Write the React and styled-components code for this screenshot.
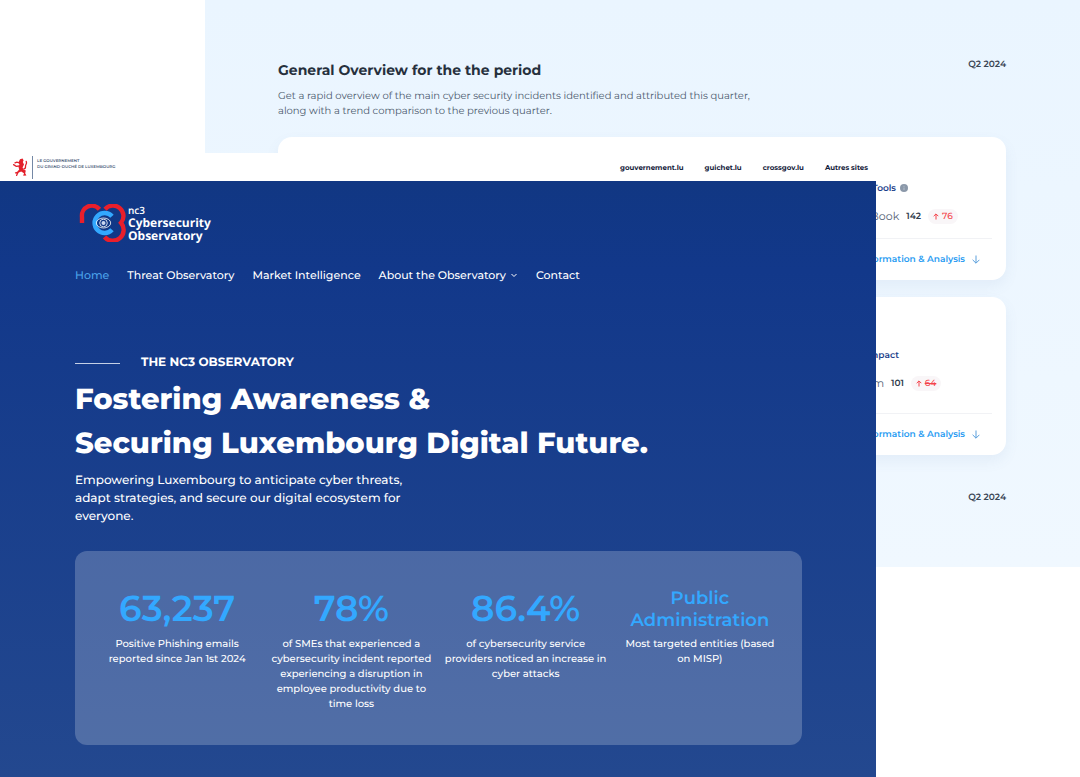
import React from "react";
import styled, { createGlobalStyle } from "styled-components";

const GlobalStyle = createGlobalStyle`
  * {
    box-sizing: border-box;
  }

  body {
    margin: 0;
    background: white;
    font-family: Montserrat, Inter, "Liberation Sans", sans-serif;
    text-rendering: geometricPrecision;
  }

  h1, h2, h3, p, dl, dd, dt {
    margin: 0;
  }

  a {
    color: inherit;
    text-decoration: none;
  }
`;

const Page = styled.div`
  display: grid;
  grid-template-columns: minmax(0, 1fr);
  grid-template-rows: minmax(100vh, auto);
`;

/* Overview page, behind */

const Overview = styled.section`
  grid-area: 1 / 1;
  align-self: start;
  margin-left: 205px;
  padding: 57px 74px 61px 73px;
  background: linear-gradient(#eaf5ff, #f0f8ff);
`;

const OverviewHead = styled.header`
  display: flex;
  justify-content: space-between;
  align-items: flex-start;
  margin-bottom: 19px;
`;

const OverviewTitle = styled.h2`
  margin-bottom: 5px;
  color: #26303d;
  font-size: 14px;
  font-weight: 700;
  line-height: 26px;
`;

const OverviewText = styled.p`
  max-width: 480px;
  color: #4a586c;
  font-size: 10px;
  line-height: 15px;
`;

const Period = styled.p`
  color: #3a4554;
  font-size: 9px;
  font-weight: 600;
  line-height: 16px;
  text-align: right;
`;

const Cards = styled.div`
  display: flex;
  flex-direction: column;
  gap: 17px;
  margin-bottom: 35px;
`;

const Card = styled.article`
  display: flex;
  flex-direction: column;
  padding: ${({ $tall }) => ($tall ? "50px" : "43px")} 14px 13px;
  border-radius: 14px;
  background: white;
  box-shadow: 0 6px 14px rgba(90, 120, 170, 0.08);
`;

const CardRow = styled.div`
  display: flex;
  justify-content: flex-end;
  align-items: center;
  gap: ${({ $gap }) => $gap || "7px"};
  height: 16px;
  margin-bottom: 12px;
  padding-right: ${({ $end }) => $end};
  white-space: nowrap;
`;

const CardTitle = styled.h3`
  color: #1c3f8b;
  font-size: 9px;
  font-weight: 600;
`;

const Info = styled.svg`
  width: 8px;
  height: 8px;
`;

const Label = styled.span`
  color: #556376;
  font-size: 11px;
`;

const Count = styled.strong`
  color: #2f3b4c;
  font-size: 9px;
  font-weight: 600;
`;

const Trend = styled.span`
  display: flex;
  align-items: center;
  justify-content: center;
  gap: 3px;
  width: 30px;
  height: 15px;
  border-radius: 8px;
  background: #f9f6f8;
  color: #f4434a;
  font-size: 9px;
  font-weight: 500;
  text-decoration: ${({ $struck }) => ($struck ? "line-through" : "none")};
`;

const CardFoot = styled.footer`
  display: flex;
  justify-content: flex-end;
  align-items: center;
  gap: 7px;
  margin-top: ${({ $tall }) => ($tall ? "10px" : "2px")};
  padding: 13px 12px 0 0;
  border-top: 1px solid #f1f2f5;
  color: #279bf2;
  font-size: 9px;
  font-weight: 600;
  line-height: 15px;
`;

/* Home page, in front */

const Home = styled.main`
  grid-area: 1 / 1;
  z-index: 1;
  display: flex;
  flex-direction: column;
  width: calc(100% - 204px);
  margin-top: 153px;
`;

const GovBar = styled.div`
  display: flex;
  justify-content: space-between;
  align-items: center;
  height: 28px;
  padding: 1px 8px 0 12px;
  background: white;
`;

const GovLogo = styled.a`
  display: flex;
  align-items: center;
  color: #4a5d7a;
  font-size: 4px;
  font-weight: 600;
  line-height: 6px;
`;

const Lion = styled.svg`
  width: 17px;
  height: 20px;
`;

const GovName = styled.span`
  height: 23px;
  margin-left: 3px;
  padding: 3px 0 0 4px;
  border-left: 1px solid #7488a5;
`;

const GovLinks = styled.nav`
  display: flex;
  gap: 21px;
  color: #14213a;
  font-size: 7px;
  font-weight: 700;
`;

const Hero = styled.div`
  flex: 1;
  padding: 23px 74px 31px 75px;
  background: linear-gradient(#113783 0%, #12388a 15%, #23488f 100%);
  color: white;
`;

const Brand = styled.a`
  display: flex;
  align-items: center;
  gap: 1px;
  width: fit-content;
  margin-left: 4px;
  font-family: "Open Sans", "Noto Sans", sans-serif;
`;

const BrandMark = styled.svg`
  width: 48px;
  height: 38px;
`;

const BrandName = styled.span`
  display: flex;
  flex-direction: column;
  font-size: 12px;
  font-weight: 700;
  line-height: 13px;
`;

const BrandSmall = styled.span`
  font-size: 10px;
  font-weight: 600;
  line-height: 12px;
`;

const MainNav = styled.nav`
  display: flex;
  align-items: center;
  gap: 18px;
  margin-top: 23px;
  font-size: 11px;
  font-weight: 500;
  line-height: 20px;
`;

const NavLink = styled.a`
  display: flex;
  align-items: center;
  gap: 4px;
  color: ${({ $active }) => ($active ? "#4ba3ea" : "white")};
  white-space: nowrap;
`;

const Eyebrow = styled.p`
  display: flex;
  align-items: center;
  gap: 21px;
  margin-top: 68px;
  font-size: 12px;
  font-weight: 700;
  line-height: 20px;

  &:before {
    content: "";
    width: 45px;
    height: 1px;
    background: #c5d0e6;
  }
`;

const Title = styled.h1`
  margin-top: 5px;
  font-size: 29px;
  font-weight: 800;
  line-height: 44px;
`;

const Lead = styled.p`
  max-width: 340px;
  margin-top: 6px;
  font-size: 12px;
  font-weight: 500;
  line-height: 18px;
`;

const Stats = styled.dl`
  display: grid;
  grid-template-columns: repeat(4, 1fr);
  margin-top: 25px;
  padding: 36px 15px 34px;
  border-radius: 12px;
  background: rgba(255, 255, 255, 0.21);
  text-align: center;
`;

const Stat = styled.div`
  display: flex;
  flex-direction: column;
  padding: 0 6px;
`;

const Figure = styled.dt`
  height: 44px;
  margin-bottom: 5px;
  color: #33a8ff;
  font-size: ${({ $words }) => ($words ? "18px" : "36px")};
  font-weight: 600;
  line-height: ${({ $words }) => ($words ? "22px" : "44px")};
`;

const Caption = styled.dd`
  min-height: 75px;
  font-size: 10px;
  font-weight: 500;
  line-height: 15px;
`;

const stats = [
  { value: "63,237", text: "Positive Phishing emails reported since Jan 1st 2024" },
  {
    value: "78%",
    text: "of SMEs that experienced a cybersecurity incident reported experiencing a disruption in employee productivity due to time loss",
  },
  {
    value: "86.4%",
    text: "of cybersecurity service providers noticed an increase in cyber attacks",
  },
  { value: "Public Administration", text: "Most targeted entities (based on MISP)", words: true },
];

const ArrowUp = () => (
  <svg width="6" height="7" viewBox="0 0 6 7" fill="none" stroke="currentColor">
    <path d="M3 6.5V1M.7 3.2 3 .9l2.3 2.3" />
  </svg>
);

const ArrowDown = () => (
  <svg width="8" height="9" viewBox="0 0 8 9" fill="none" stroke="#5a9fdc">
    <path d="M4 .5v7.6M.6 4.8 4 8.2l3.4-3.4" />
  </svg>
);

const OverviewCard = ({ title, info, titleEnd, label, count, trend, rowEnd, tall, struck }) => (
  <Card $tall={tall}>
    <CardRow $end={titleEnd} $gap="4px">
      <CardTitle>{title}</CardTitle>
      {info && (
        <Info viewBox="0 0 8 8">
          <circle cx="4" cy="4" r="4" fill="#8b98a9" />
          <path d="M4 3.5V6M4 1.8v1" stroke="#b4bfcc" />
        </Info>
      )}
    </CardRow>
    <CardRow $end={rowEnd}>
      <Label>{label}</Label>
      <Count>{count}</Count>
      <Trend $struck={struck}>
        <ArrowUp />
        {trend}
      </Trend>
    </CardRow>
    <CardFoot $tall={tall}>
      <a href="#analysis">Information &amp; Analysis</a>
      <ArrowDown />
    </CardFoot>
  </Card>
);

const App = () => {
  return (
    <>
      <GlobalStyle />
      <Page>
        <Overview>
          <OverviewHead>
            <div>
              <OverviewTitle>General Overview for the the period</OverviewTitle>
              <OverviewText>
                Get a rapid overview of the main cyber security incidents identified and attributed
                this quarter, along with a trend comparison to the previous quarter.
              </OverviewText>
            </div>
            <Period>Q2 2024</Period>
          </OverviewHead>
          <Cards>
            <OverviewCard
              title="Tools"
              info
              titleEnd="84px"
              label="Book"
              count="142"
              trend="76"
              rowEnd="34px"
            />
            <OverviewCard
              title="Impact"
              titleEnd="93px"
              label="m"
              count="101"
              trend="64"
              rowEnd="51px"
              tall
              struck
            />
          </Cards>
          <Period>Q2 2024</Period>
        </Overview>

        <Home>
          <GovBar>
            <GovLogo href="#gouvernement">
              <Lion viewBox="0 0 17 20" fill="none" stroke="#e3202b" strokeLinecap="round">
                <path
                  d="M8 1.2 10.6.6l1 1.8-.8 1.6 1.2 2.6-1.4 2.8.8 2 2.4 1.2-.6 2.600 1.200 2.400-3.200.2.8-2.600-2.800-1.600-2.400.8-.8 1.400-2.800-.2-.4-1.200 2.400-.6 2-2.200-.6-2.200.8-2.800-1-2.200z"
                  fill="#e3202b"
                  stroke="none"
                />
                <path d="M7.6 4.800 4.800 4.200 3 4.800M7.400 8 4.200 8.400 1.600 6.600" strokeWidth="1.3" />
                <path d="M5.4 15.400 4.600 17.400M11.800 11c3-.4 1-3 2-4.200s1.400-1.600.4-3.400" strokeWidth="1.3" />
              </Lion>
              <GovName>
                LE GOUVERNEMENT
                <br />
                DU GRAND-DUCHÉ DE LUXEMBOURG
              </GovName>
            </GovLogo>
            <GovLinks>
              <a href="#gouvernement">gouvernement.lu</a>
              <a href="#guichet">guichet.lu</a>
              <a href="#crossgov">crossgov.lu</a>
              <a href="#autres">Autres sites</a>
            </GovLinks>
          </GovBar>

          <Hero>
            <Brand href="#home">
              <BrandMark viewBox="0 0 48 38" fill="none">
                <g stroke="#e91f2b" strokeWidth="4.4">
                  <path d="M3 19V13A10 10 0 0 1 20.5 5.2" />
                  <path d="M26 5.2A10.5 10.5 0 0 1 42 18.8A10.5 10.5 0 0 1 25.5 33" />
                </g>
                <path d="M33 12.2A10 10 0 1 0 33 25.8" stroke="#33a8ff" strokeWidth="4.6" />
                <g stroke="white" strokeWidth=".8">
                  <ellipse cx="24.5" cy="19" rx="7.2" ry="5" />
                  <circle cx="24.5" cy="19" r="3.8" />
                </g>
                <circle cx="24.5" cy="19" r="2" fill="#c9d6f0" />
              </BrandMark>
              <BrandName>
                <BrandSmall>nc3</BrandSmall>
                <span>Cybersecurity</span>
                <span>Observatory</span>
              </BrandName>
            </Brand>

            <MainNav>
              <NavLink href="#home" $active>
                Home
              </NavLink>
              <NavLink href="#threat">Threat Observatory</NavLink>
              <NavLink href="#market">Market Intelligence</NavLink>
              <NavLink href="#about">
                About the Observatory
                <svg width="8" height="8" viewBox="0 0 8 8" fill="none" stroke="white">
                  <path d="M1.5 3 4 5.5 6.5 3" />
                </svg>
              </NavLink>
              <NavLink href="#contact">Contact</NavLink>
            </MainNav>

            <Eyebrow>THE NC3 OBSERVATORY</Eyebrow>
            <Title>
              Fostering Awareness &amp;
              <br />
              Securing Luxembourg Digital Future.
            </Title>
            <Lead>
              Empowering Luxembourg to anticipate cyber threats, adapt strategies, and secure our
              digital ecosystem for everyone.
            </Lead>

            <Stats>
              {stats.map(({ value, text, words }) => (
                <Stat key={value}>
                  <Figure $words={words}>{value}</Figure>
                  <Caption>{text}</Caption>
                </Stat>
              ))}
            </Stats>
          </Hero>
        </Home>
      </Page>
    </>
  );
};

export default App;
